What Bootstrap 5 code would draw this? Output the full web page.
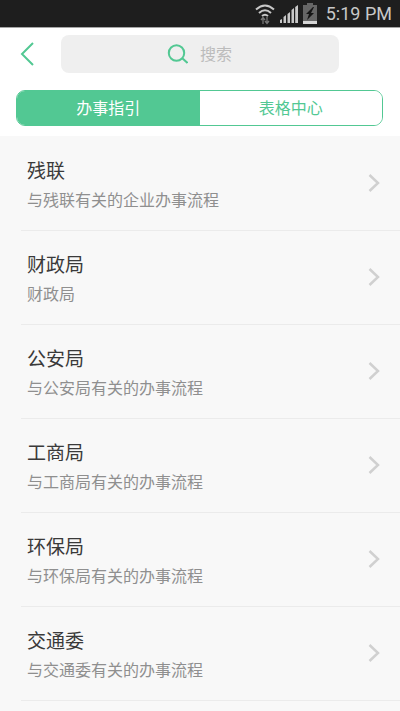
<!DOCTYPE html>
<html lang="zh-CN">
<head>
<meta charset="utf-8">
<meta name="viewport" content="width=device-width, initial-scale=1">
<title>办事指引</title>
<link href="https://cdn.jsdelivr.net/npm/bootstrap@5.3.0/dist/css/bootstrap.min.css" rel="stylesheet">
<style>
:root { --green: #52c893; }
body { background: #f8f8f8; font-family: "Liberation Sans", "Noto Sans CJK SC", sans-serif; font-size: 16px; }
.status-bar { height: 28px; background: #1e1e1e; color: #c8c8c8; border-bottom: 1px solid #a5a5a5; font-family: Roboto, sans-serif; font-size: 18px; line-height: 27px; padding-right: 8px; gap: 5px; }
.top-header { padding-bottom: 10px; }
.top-bar { padding: 7px 61px 17px 0; }
.back { width: 61px; padding: 0 0 0 20px; }
.search { height: 38px; background: #efefef; border-radius: 8px; }
.search label { padding-right: 12px; }
.search input { font-size: 16px; background: none; border: 0; outline: 0; padding: 2px 0 0; color: #666; }
.search input::placeholder { color: #bcbcbc; opacity: 1; }
.switcher { margin: 0 17px 0 16px; border: 1px solid var(--green); border-radius: 9px; overflow: hidden; }
.switcher .btn { width: 50%; height: 34px; padding: 1px 0 0; border: 0; border-radius: 0; font-size: 16px; line-height: 33px; color: var(--green); background: #fff; }
.switcher .btn.active { background: var(--green); color: #fff; }
.guide-list { padding-top: 1px; }
.guide { margin-left: 21px; padding: 21px 20px 17px 6px; border-bottom: 1px solid #ebebeb; }
.guide svg { margin-bottom: 5px; }
.guide-title { font-size: 19px; line-height: 28px; color: #3a3a3a; }
.guide-note { font-size: 16px; line-height: 24px; color: #8f8f8f; margin-top: 3px; }
</style>
</head>
<body>
<svg class="d-none" aria-hidden="true"><symbol id="chevron" viewBox="0 0 12 20"><path fill="none" stroke="#d0d0d0" stroke-width="2.500" d="m1.500 2 8.500 8-8.500 8"/></symbol></svg>
<div class="status-bar d-flex align-items-center justify-content-end">
  <svg width="20" height="22" viewBox="0 0 20 22" fill="none" stroke="#c8c8c8" stroke-width="2" aria-hidden="true"><path d="M1 6.500Q10-1.500 19 6.500M4 10Q10 4.500 16 10M7 13Q10 10.500 13 13"/><path stroke="#777" stroke-width="1.300" d="M8 21v-6M6 17l2-2.500 2 2.500M12 14v6M10 18l2 2.500 2-2.500"/></svg>
  <svg width="18" height="18" viewBox="0 0 18 18" fill="#c8c8c8" aria-hidden="true"><path d="M0 18v-3l2-1v4zM3.500 18v-6l2.500-2v8zM7.500 18V9l2.500-2v11zM11.500 18V5L14 3v15zM15.200 18V2L18 0v18z"/></svg>
  <svg width="14" height="21" viewBox="0 0 14 21" aria-hidden="true"><path fill="#666" d="M4 0h6v2h4v19H0V2h4z"/><path fill="#d5d5d5" d="M0 18h14v3H0z"/><path fill="#151515" d="M10 4 3 11h3l-2 6 7-7H8l3-6z"/></svg>
  <span class="ms-1">5:19 PM</span>
</div>
<header class="top-header bg-white">
  <div class="top-bar d-flex align-items-center">
    <button class="back btn border-0 flex-shrink-0 d-flex" type="button" aria-label="返回"><svg width="14" height="24" viewBox="0 0 14 24" fill="none" stroke="#52c893" stroke-width="2"><path d="M13 1 2 12l11 11"/></svg></button>
    <form class="search d-flex align-items-center flex-grow-1" role="search">
      <label class="w-50 d-flex justify-content-end" for="q"><svg width="21" height="20" viewBox="0 0 21 20" fill="none" stroke="#52c893" stroke-width="2" role="img" aria-label="搜索"><circle cx="9.500" cy="9" r="7.700"/><path d="m15 14 5.500 5"/></svg></label>
      <input class="w-50" id="q" type="text" placeholder="搜索">
    </form>
  </div>
  <div class="switcher d-flex">
    <button class="btn active" type="button">办事指引</button>
    <button class="btn" type="button">表格中心</button>
  </div>
</header>
<main class="guide-list">
  <a class="guide d-flex align-items-center justify-content-between text-decoration-none" href="#">
    <div><div class="guide-title">残联</div><div class="guide-note">与残联有关的企业办事流程</div></div>
    <svg width="12" height="20" aria-hidden="true"><use href="#chevron"/></svg>
  </a>
  <a class="guide d-flex align-items-center justify-content-between text-decoration-none" href="#">
    <div><div class="guide-title">财政局</div><div class="guide-note">财政局</div></div>
    <svg width="12" height="20" aria-hidden="true"><use href="#chevron"/></svg>
  </a>
  <a class="guide d-flex align-items-center justify-content-between text-decoration-none" href="#">
    <div><div class="guide-title">公安局</div><div class="guide-note">与公安局有关的办事流程</div></div>
    <svg width="12" height="20" aria-hidden="true"><use href="#chevron"/></svg>
  </a>
  <a class="guide d-flex align-items-center justify-content-between text-decoration-none" href="#">
    <div><div class="guide-title">工商局</div><div class="guide-note">与工商局有关的办事流程</div></div>
    <svg width="12" height="20" aria-hidden="true"><use href="#chevron"/></svg>
  </a>
  <a class="guide d-flex align-items-center justify-content-between text-decoration-none" href="#">
    <div><div class="guide-title">环保局</div><div class="guide-note">与环保局有关的办事流程</div></div>
    <svg width="12" height="20" aria-hidden="true"><use href="#chevron"/></svg>
  </a>
  <a class="guide d-flex align-items-center justify-content-between text-decoration-none" href="#">
    <div><div class="guide-title">交通委</div><div class="guide-note">与交通委有关的办事流程</div></div>
    <svg width="12" height="20" aria-hidden="true"><use href="#chevron"/></svg>
  </a>
</main>
<script src="https://cdn.jsdelivr.net/npm/bootstrap@5.3.0/dist/js/bootstrap.bundle.min.js"></script>
</body>
</html>
